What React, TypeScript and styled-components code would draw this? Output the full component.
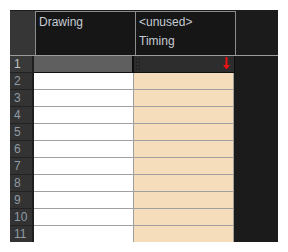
import styled, { createGlobalStyle } from 'styled-components';

const GlobalStyle = createGlobalStyle`
  body {
    margin: 0;
    background: #ffffff;
    font-family: 'Liberation Sans', Arial, sans-serif;
  }
`;

const Panel = styled.div`
  margin: 10px;
  width: 268px;
  height: 232px;
  background: #1b1b1b;
  overflow: hidden;
  display: flex;
  flex-direction: column;
`;

const Header = styled.div`
  display: flex;
  height: 45px;
  flex-shrink: 0;
  border-bottom: 1px solid #9c9c9c;
`;

const Corner = styled.div`
  width: 25px;
  margin-top: 1px;
  background: #363636;
`;

const HeadCell = styled.div<{ $last?: boolean }>`
  margin-top: 1px;
  padding: 1px 0 0 3px;
  box-sizing: border-box;
  width: ${(p) => (p.$last ? '101px' : '100px')};
  background: #161616;
  border-top: 1px solid #8c8c8c;
  border-left: 1px solid #8c8c8c;
  border-right: ${(p) => (p.$last ? '1px solid #8c8c8c' : 'none')};
  color: #c6ccd4;
  font-size: 12px;
  line-height: 19px;
`;

const Row = styled.div`
  display: flex;
  height: 17px;
  flex-shrink: 0;
`;

const Num = styled.div<{ $active?: boolean }>`
  width: 23px;
  box-sizing: border-box;
  padding-left: 4px;
  background: ${(p) => (p.$active ? '#393939' : '#333333')};
  border-right: 1px solid #1e1e1e;
  border-bottom: 1px solid #222222;
  color: ${(p) => (p.$active ? '#c4c4c4' : '#8f9ba6')};
  font-size: 12px;
  line-height: 16px;
`;

const Spacer = styled.div`
  width: 1px;
  background: #1e1e1e;
`;

const Cell = styled.div<{ $bg: string }>`
  width: 100px;
  box-sizing: border-box;
  background: ${(p) => p.$bg};
  border-right: 1px solid #a0a0a0;
  border-bottom: 1px solid #a0a0a0;
`;

const SelDrawing = styled.div`
  width: 100px;
  box-sizing: border-box;
  background: #5f5f5f;
  border-right: 2px solid #0c0c0c;
  border-bottom: 1px solid #111111;
`;

const SelTiming = styled.div`
  position: relative;
  width: 101px;
  box-sizing: border-box;
  background: #2d2d2d;
  border-right: 1px solid #0c0c0c;
  border-bottom: 1px solid #111111;
`;

const Grip = styled.div`
  position: absolute;
  left: 1px;
  top: 1px;
  width: 5px;
  height: 14px;
  background-image: radial-gradient(#1c1c1c 45%, transparent 50%);
  background-size: 3px 3.5px;
`;

const Arrow = styled.svg`
  position: absolute;
  right: 4px;
  top: 1px;
`;

const rows = [2, 3, 4, 5, 6, 7, 8, 9, 10, 11];

const App = () => (
  <>
    <GlobalStyle />
    <Panel>
      <Header>
        <Corner />
        <HeadCell>Drawing</HeadCell>
        <HeadCell $last>
          &lt;unused&gt;
          <br />
          Timing
        </HeadCell>
      </Header>
      <Row>
        <Num $active>1</Num>
        <Spacer />
        <SelDrawing />
        <SelTiming>
          <Grip />
          <Arrow width="7" height="13" viewBox="0 0 7 13">
            <rect x="2.5" y="0" width="2" height="9" fill="#ee1111" />
            <path d="M0 8 L7 8 L3.5 12.5 Z" fill="#ee1111" />
          </Arrow>
        </SelTiming>
      </Row>
      {rows.map((n) => (
        <Row key={n}>
          <Num>{n}</Num>
          <Spacer />
          <Cell $bg="#ffffff" />
          <Cell $bg="#f5dcba" />
        </Row>
      ))}
    </Panel>
  </>
);

export default App;
